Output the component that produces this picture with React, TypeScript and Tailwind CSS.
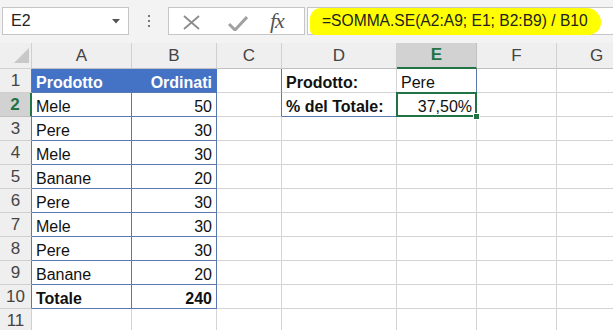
import React from "react"

const cols = ["", "A", "B", "C", "D", "E", "F", "G"]
const widths = ["w-[32px]", "w-[100px]", "w-[85px]", "w-[65px]", "w-[115px]", "w-[80px]", "w-[80px]", "w-[80px]"]

const data: string[][] = [
  ["Prodotto", "Ordinati", "", "Prodotto:", "Pere"],
  ["Mele", "50", "", "% del Totale:", "37,50%"],
  ["Pere", "30"],
  ["Mele", "30"],
  ["Banane", "20"],
  ["Pere", "30"],
  ["Mele", "30"],
  ["Pere", "30"],
  ["Banane", "20"],
  ["Totale", "240"],
  [],
]

const cellClass = (r: number, c: number) => {
  // r is 1-based row, c is 1-based column (A = 1)
  if (c <= 2 && r === 1) return "bg-[#4472c4] text-white font-bold border-r border-b border-r-[#4472c4] border-b-[#5b78b0]"
  if (c <= 2 && r <= 10) return "border-r border-b border-[#5b78b0]"
  if (c === 3 && r <= 2) return "border-r border-b border-r-[#5b78b0] border-b-[#d4d4d4]"
  if (c === 4 && r === 1) return "border-r border-b border-[#d4d4d4] font-bold"
  if (c === 4 && r === 2) return "border-r border-b border-r-[#d4d4d4] border-b-[#5b78b0] font-bold"
  if (c === 5 && r === 1) return "border-r border-b border-r-[#5b78b0] border-b-[#d4d4d4]"
  return "border-r border-b border-[#d4d4d4]"
}

const rightAligned = (r: number, c: number) => (c === 2) || (c === 5 && r === 2)

const Toolbar = () => (
  <div className="h-[43px] bg-[#f3f3f3] flex items-start pt-[7px] pl-[2px]">
    <div className="w-[127px] h-[28px] bg-white border border-[#c6c6c6] flex items-center justify-between pl-[8px] pr-[8px]">
      <span className="text-[16px] text-[#222]">E2</span>
      <svg width="8" height="5" viewBox="0 0 8 5"><path d="M0 0h8L4 4.5z" fill="#555" /></svg>
    </div>
    <div className="w-[39px] h-[28px] flex flex-col items-center justify-center gap-[3px]">
      <div className="w-[2px] h-[2px] bg-[#777]" />
      <div className="w-[2px] h-[2px] bg-[#777]" />
      <div className="w-[2px] h-[2px] bg-[#777]" />
    </div>
    <div className="w-[137px] h-[28px] bg-white border border-[#c6c6c6] flex items-center pl-[14px]">
      <svg width="17" height="15" viewBox="0 0 17 15" className="mt-[3px]">
        <path d="M1 1L16 14M16 1L1 14" stroke="#8c8c8c" strokeWidth="1.8" fill="none" />
      </svg>
      <svg width="20" height="15" viewBox="0 0 20 15" className="ml-[28px] mt-[4px]">
        <path d="M1 8l6 6L19 1" stroke="#a0a0a0" strokeWidth="3" fill="none" />
      </svg>
      <span className="ml-[22px] text-[22px] leading-[22px] italic text-[#555] font-['Liberation_Serif',serif] tracking-[-1px]">fx</span>
    </div>
    <div className="flex-1 h-[28px] ml-[2px] bg-white border-y border-l border-[#c6c6c6] flex items-center pl-[2px]">
      <span className="h-[27px] flex items-center bg-[#ffff00] pl-[12px] pr-[13px] rounded-[12px_16px_14px_6px] text-[15.6px] text-[#222]">
        =SOMMA.SE(A2:A9; E1; B2:B9) / B10
      </span>
    </div>
  </div>
)

const HeaderRow = () => (
  <div className="flex h-[26px]">
    {cols.map((name, c) => {
      if (c === 0) {
        return (
          <div key={c} className={`${widths[0]} shrink-0 bg-[#efefef] border-r border-b border-[#d0d0d0] flex items-end justify-end pr-[2px] pb-[5px]`}>
            <svg width="15" height="15" viewBox="0 0 15 15"><path d="M15 0V15H0z" fill="#c8c8c8" /></svg>
          </div>
        )
      }
      if (name === "E") {
        return (
          <div key={c} className={`${widths[c]} shrink-0 bg-[#d2d2d2] border-r border-r-[#c0c0c0] border-b-2 border-b-[#217346] flex items-center justify-center text-[17px] font-bold text-[#217346]`}>
            {name}
          </div>
        )
      }
      return (
        <div key={c} className={`${widths[c]} shrink-0 bg-[#efefef] border-r border-b border-r-[#d0d0d0] border-b-[#c0c0c0] flex items-center justify-center text-[17px] text-[#444]`}>
          {name}
        </div>
      )
    })}
  </div>
)

const App = () => {
  return (
    <div className="w-[613px] h-[330px] overflow-hidden bg-white font-['Liberation_Sans',Arial,sans-serif] text-[16px] text-[#111]">
      <Toolbar />
      <HeaderRow />
      {data.map((row, i) => {
        const r = i + 1
        return (
          <div key={r} className="flex h-[24px]">
            {r === 2 ? (
              <div className={`${widths[0]} shrink-0 bg-[#d2d2d2] border-r-2 border-r-[#217346] border-b border-b-[#c0c0c0] flex items-center justify-center text-[17px] font-bold text-[#217346]`}>
                {r}
              </div>
            ) : (
              <div className={`${widths[0]} shrink-0 bg-[#efefef] border-r border-b ${r <= 10 ? "border-r-[#5b78b0]" : "border-r-[#d0d0d0]"} border-b-[#d0d0d0] flex items-center justify-center text-[17px] text-[#444]`}>
                {r}
              </div>
            )}
            {cols.slice(1).map((_, j) => {
              const c = j + 1
              const text = row[j] ?? ""
              const isSel = r === 2 && c === 5
              return (
                <div
                  key={c}
                  className={`${widths[c]} shrink-0 relative flex items-end leading-[18px] ${rightAligned(r, c) ? "justify-end pr-[4px]" : "pl-[4px]"} ${cellClass(r, c)} ${r === 10 ? "font-bold" : ""} ${isSel ? "z-10" : ""}`}
                >
                  {text}
                  {isSel && (
                    <>
                      <div className="absolute -left-[1px] -top-[1px] -right-[1px] -bottom-[1px] border-2 border-[#217346]" />
                      <div className="absolute -right-[4px] -bottom-[4px] w-[7px] h-[7px] bg-[#217346] border border-white" />
                    </>
                  )}
                </div>
              )
            })}
          </div>
        )
      })}
    </div>
  )
}

export default App
